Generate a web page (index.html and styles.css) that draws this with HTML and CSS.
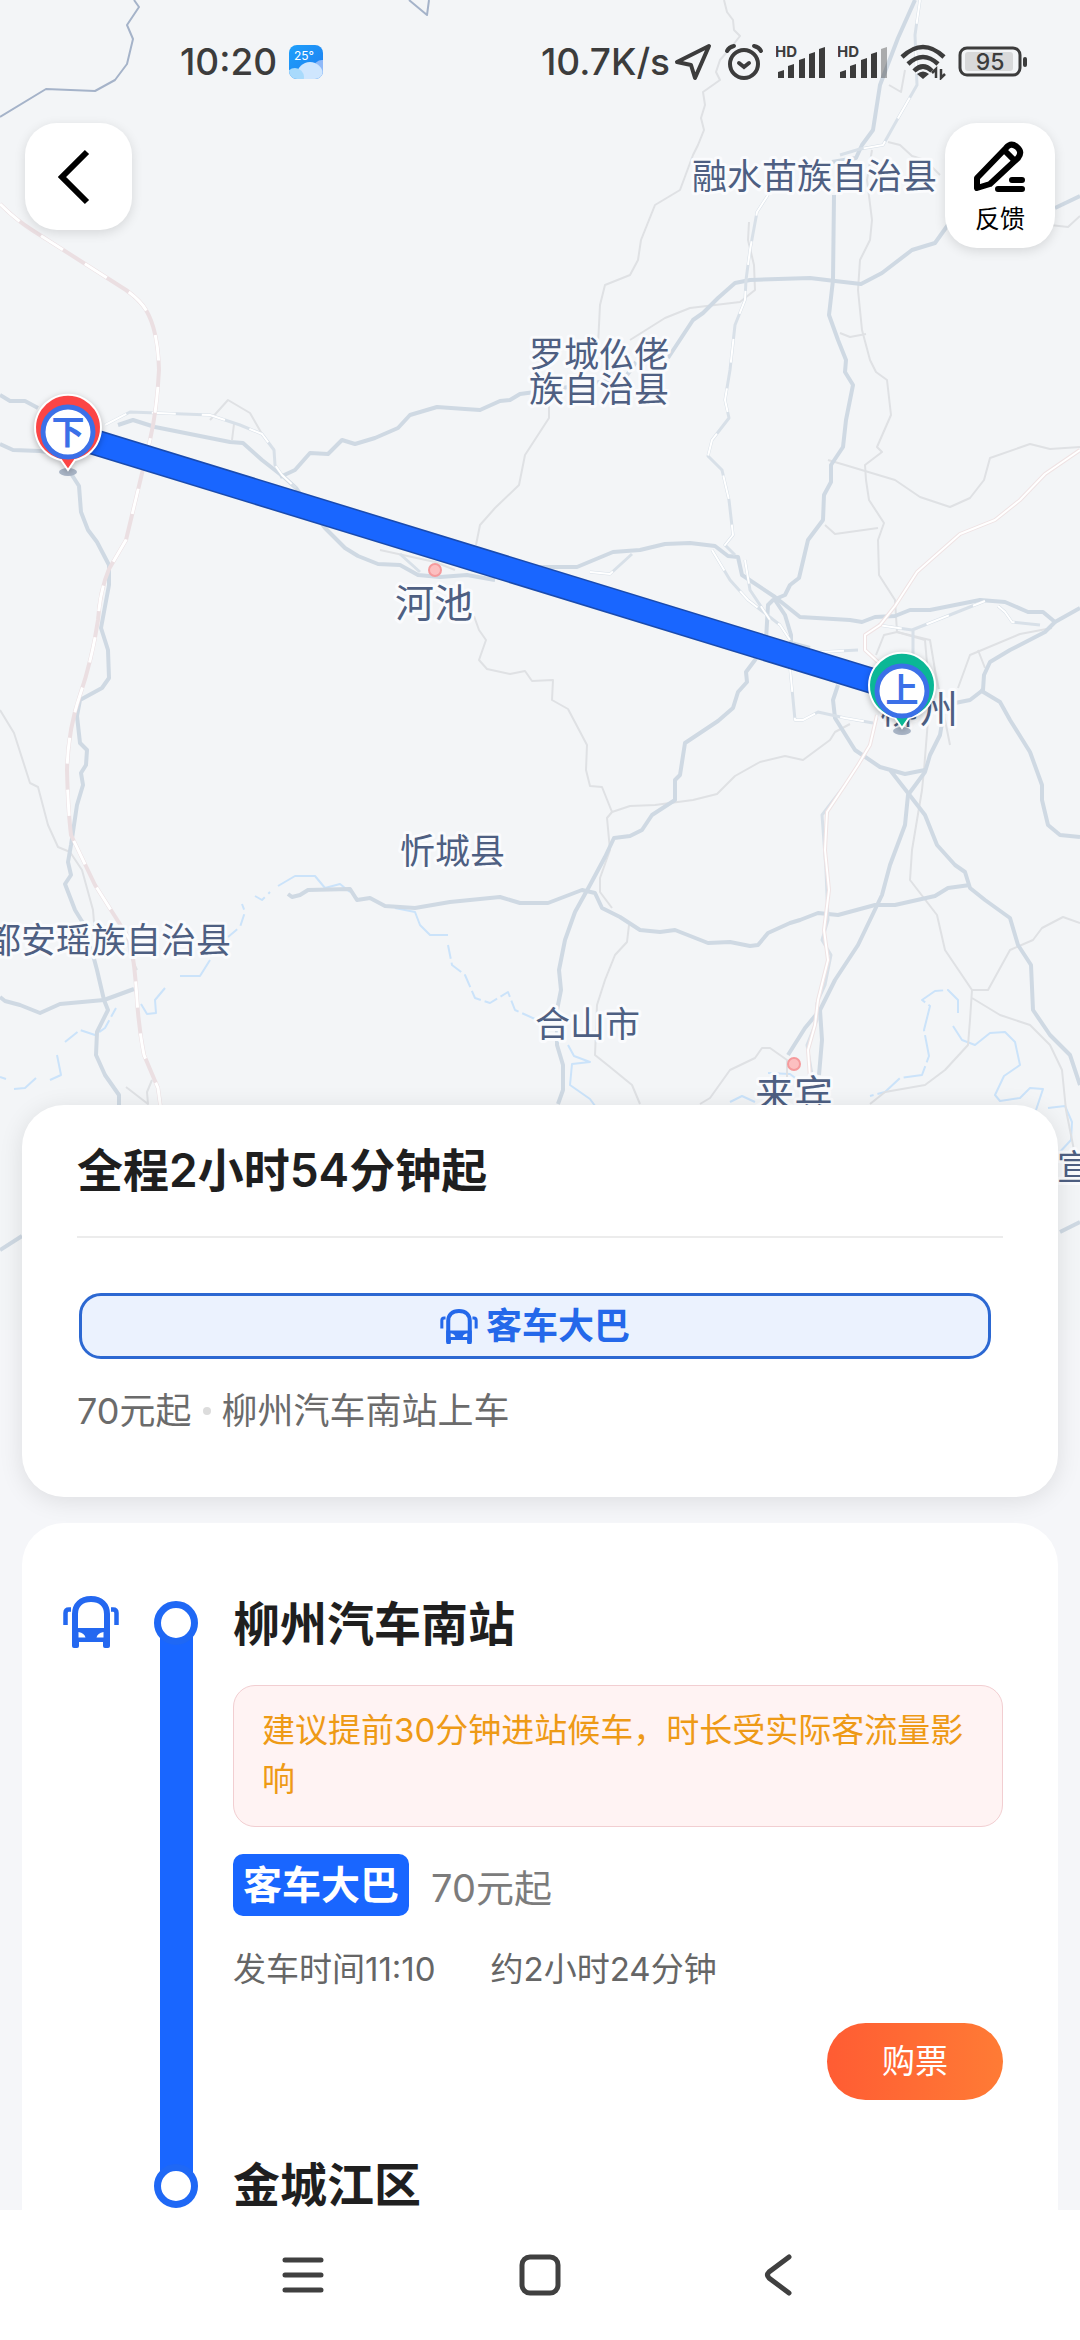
FILE: index.html
```html
<!DOCTYPE html>
<html lang="zh-CN">
<head>
<meta charset="utf-8">
<meta name="viewport" content="width=device-width, initial-scale=1">
<title>客车大巴路线</title>
<link rel="stylesheet" href="styles.css">
</head>
<body>
<svg class="sprite" aria-hidden="true">
  <symbol id="bus" viewBox="0 0 56 52">
    <path fill="none" stroke="currentColor" stroke-width="6" d="M12 49V18C12 9 18 3 28 3S44 9 44 18V49"/>
    <path fill="currentColor" fill-rule="evenodd" d="M9 32H47V50Q47 52 45 52H42Q40 52 40 50V46H16V50Q16 52 14 52H11Q9 52 9 50ZM15.500 36V41.500H22.500Q21.500 37 15.500 36ZM40.500 36V41.500H33.500Q34.500 37 40.500 36Z"/>
    <path fill="none" stroke="currentColor" stroke-width="4.500" d="M8 13.500H6Q2.500 13.500 2.500 17V29M48 13.500H50Q53.500 13.500 53.500 17V29"/>
  </symbol>
</svg>
<div class="app">
  <main class="content">
    <svg class="map" viewBox="0 0 1080 1330" preserveAspectRatio="xMidYMin slice" role="img" aria-label="路线地图">
      <g class="line border">
        <path d="M134 0L139 7L127 25L133 39L127 64L115 80L95 91L46 89L0 117"/>
        <path d="M409 0L427 15L429 0"/>
      </g>
      <g class="line river">
        <path d="M278 886L295 876H315L325 888L340 884L350 892"/>
        <path d="M228 937L240 927L245 912L242 904M255 896L262 900L270 892" stroke-dasharray="12 5"/>
        <path d="M395 908L415 912L420 925L430 935L448 935"/>
        <path d="M448 945L452 965L465 975L475 998L490 1003L508 992L515 1010L535 1019" stroke-dasharray="14 4"/>
        <path d="M210 960L200 976H180M165 988L155 1000L156 1013L147 1014L141 1004"/>
        <path d="M65 1042L80 1030L95 1035L105 1028L116 1008" stroke-dasharray="16 4"/>
        <path d="M57 1055L61 1075L50 1080M14 1089L25 1088L36 1078M0 1077L6 1079"/>
        <path d="M568 1045L574 1056L590 1062L572 1064L570 1085L590 1099L598 1110"/>
        <path d="M958 1013V1000L948 990L935 991L922 1000L930 1006L924 1030L929 1056L922 1075L900 1078L885 1092L870 1096" stroke-dasharray="28 4"/>
        <path d="M953 1026L962 1040L975 1045L990 1033L1005 1032L1015 1042L1020 1065L1004 1076L995 1095L1000 1101L1020 1098L1030 1088L1043 1089L1036 1110"/>
        <path d="M1048 1108L1065 1106L1072 1122L1071 1140L1058 1154M768 1073L790 1074L798 1080M730 1102L742 1096L755 1102"/>
      </g>
      <g class="line minor">
        <path d="M0 710L14 733L30 783L38 787L48 825L58 847L70 852L82 870L93 910L95 935M126 930L130 955L137 970M126 1087L148 1104L147 1092L152 1080"/>
        <path d="M724 0L727 12L733 20L734 30L740 36L733 45L720 60L716 72L720 80L703 92L705 105L701 118L704 130L698 145L693 155L680 190L655 205L641 240L638 260L630 275L605 285L600 305L598 345"/>
        <path d="M549 406V418L525 455L519 485L495 508L480 525L476 545"/>
        <path d="M630 340L665 318L690 308L740 302L755 290L754 265L748 240L749 222"/>
        <path d="M872 150L867 180L872 220L870 240L860 260L858 290L862 330L870 360L876 372L887 380L891 415L877 447L882 452L865 465L866 480L869 500L884 523L878 540L879 575L895 600L897 632L930 640L935 670L950 745M840 333L850 337L866 334"/>
        <path d="M828 460L845 465L895 480L920 497L950 507L970 498L984 480L990 458L1030 444L1050 449L1080 447M825 525L835 534L878 528"/>
        <path d="M888 142L900 145L912 156L925 160L940 175M1050 225L1068 227L1080 216M889 85L901 92L905 70"/>
        <path d="M474 616L479 630L486 640L479 660L487 669L510 674L525 671L532 681L553 680L552 700L568 709L587 745L586 770L590 786L602 787L612 812L630 806L655 805L693 800L717 794L735 776L760 762L785 756L803 760L830 740L835 732L850 724"/>
        <path d="M612 812L607 818L610 850L600 878L600 892L612 908M629 925L627 942L615 955L605 980L597 1005L595 1055L610 1067L632 1085L640 1104"/>
        <path d="M932 690L928 720L924 770L922 790L912 850L910 880L937 915L945 950L972 990L970 1020L968 1045L945 1070L925 1085L885 1092L870 1104"/>
        <path d="M972 990H988L1010 950L1033 940L1042 928L1063 917L1080 923M972 998L1000 1015L1030 1025L1050 1045L1062 1070L1066 1110L1074 1150L1066 1182"/>
        <path d="M700 1104L710 1098L730 1070L755 1058L762 1048L770 1048L787 1060V1082"/>
        <path d="M876 655L884 635L897 632L925 640L928 675M958 688L970 655L1020 634L1052 628M978 650L985 668"/>
        <path d="M210 420L228 400L250 413L262 434M234 424L232 440M380 550L435 562L455 570"/>
      </g>
      <g class="line road">
        <path d="M0 395L10 401H25L38 408M0 444L13 450L40 451L68 455M70 472L79 486L81 512L88 530L97 542L109 565V585L101 628L108 650L109 678L102 688L80 700L77 716L80 743L87 750L86 765L81 773L83 785L77 805L71 845L68 862L71 875L65 884L75 910L83 923L93 955L97 970L104 1000L108 1010L97 1032L96 1055L105 1075L119 1095V1110L113 1130"/>
        <path d="M0 997L5 1001L20 1005L40 1013L60 1004L104 1000L134 989"/>
        <path d="M118 425L133 420L155 427L195 435L230 442L243 443L262 460L285 478L296 488L325 528L345 548L358 556L378 564L400 565L418 575L440 577L467 575L495 580"/>
        <path d="M280 477L295 470L310 453L328 454L342 440L355 444L375 438L398 428L410 415L437 407L465 409L480 410L500 401L510 400L520 394L550 390L625 378L636 362M668 358L693 320L703 313L718 298L735 283L750 280L810 278L835 281L861 284L882 273L912 250L935 243L950 222M1055 208L1080 196"/>
        <path d="M915 0L898 38L880 85L873 130L862 145L856 158L832 162M834 195L833 280L829 315L838 340L846 360L845 372L853 385L846 420L843 447L831 465V482L824 495L823 520L808 540L799 578L790 585L785 595L773 600L768 605L766 640L755 660L746 672L747 682L738 692L733 708L718 721L685 743L680 775L675 780V800L652 815L642 830L630 836L614 838L605 857L590 885L575 912L565 940L559 970L561 990L557 1010V1045L563 1065V1090L558 1104"/>
        <path d="M540 567H577L613 552L640 550L665 544L690 543L715 546L728 556L738 557L742 575L775 597L800 617L850 620L862 622L875 617L895 616L910 610H930L980 600L1005 602L1028 612L1043 612L1055 622L1080 608"/>
        <path d="M775 600L785 615L791 635V643L810 648"/>
        <path d="M1055 622L1045 632L1010 650L990 662L984 675L983 690L970 700L945 705L940 735L930 755L925 772L908 795L905 825L890 865L882 895L870 920L858 945L835 980L820 1010L805 1028L788 1055"/>
        <path d="M838 685L833 700L835 718L855 750L880 767L905 774L925 770M890 770L908 793L925 815L937 845L955 865L965 872L970 888L985 900L1010 918L1018 945L1031 965L1033 1010L1050 1035L1070 1055L1080 1085"/>
        <path d="M820 1010L822 1040L819 1075"/>
        <path d="M980 690L1000 702L1010 720L1030 752L1042 785V800L1048 825L1060 835L1080 837"/>
        <path d="M288 894L292 897L300 895L308 890L350 889L357 900L370 898L385 906L415 908L450 902L480 899L500 897L520 903H548L582 890L595 893L602 908L620 917L640 930L660 932L675 930L708 943L730 942L750 946L758 945L768 933L790 923L800 920L818 913L838 915L875 905H895L935 896L948 888L970 885"/>
        <path d="M1060 1232L1080 1222M0 1250L22 1236"/>
      </g>
      <g class="line lane">
        <path d="M105 425L130 412L210 415L240 425L262 434L274 450L275 465L282 475L296 488"/>
        <path d="M768 195L757 212L750 250L746 280L745 300L735 325L730 370L725 400L729 418L712 440L708 456L722 470L729 500L733 535L725 545L735 555"/>
        <path d="M920 0L915 35L917 85L897 120L883 145L860 149L840 155M590 572L610 574L632 554M712 550L730 580L748 600L780 625L790 640M745 560L750 590L770 620M790 668L795 720H803L818 712L845 718L873 723M820 652L858 650M878 625L912 630L985 601M913 630V655M998 606L1005 612L1012 622L1040 625"/>
        <path d="M845 785L822 815L826 870L828 920L822 940L831 955L825 985L817 1003V1020L807 1045L812 1075M400 554L420 572"/>
      </g>
      <g class="line lane-dash">
        <path d="M105 425L130 412L210 415L240 425L262 434L274 450L275 465L282 475L296 488"/>
        <path d="M768 195L757 212L750 250L746 280L745 300L735 325L730 370L725 400L729 418L712 440L708 456L722 470L729 500L733 535L725 545L735 555"/>
        <path d="M920 0L915 35L917 85L897 120L883 145L860 149L840 155M590 572L610 574L632 554M712 550L730 580L748 600L780 625L790 640M745 560L750 590L770 620M790 668L795 720H803L818 712L845 718L873 723M820 652L858 650M878 625L912 630L985 601M998 606L1005 612L1012 622L1040 625"/>
      </g>
      <path class="line rail" d="M0 204Q16 220 32 230L126 290Q140 300 146 310Q158 330 159 370Q157 410 150 440L126 540L109 569Q100 590 98 620Q92 660 80 695Q68 730 67 770Q68 810 71 835L95 885L130 940Q135 965 137 1000Q139 1030 144 1055L158 1088L161 1110"/>
      <path class="line rail-dash" d="M0 204Q16 220 32 230L126 290Q140 300 146 310Q158 330 159 370Q157 410 150 440L126 540L109 569Q100 590 98 620Q92 660 80 695Q68 730 67 770Q68 810 71 835L95 885L130 940Q135 965 137 1000Q139 1030 144 1055L158 1088L161 1110"/>
      <path class="line fast" d="M1080 450L1045 474L1020 500L995 520L960 534L935 556L917 572L895 606L880 625L865 635V650L878 662M877 715L870 745L858 765L845 785L827 812L825 850L829 890L824 930L828 960L818 1000L815 1025L808 1050L810 1078"/>
      <path class="line fast-core" d="M1080 450L1045 474L1020 500L995 520L960 534L935 556L917 572L895 606L880 625L865 635V650L878 662M877 715L870 745L858 765L845 785L827 812L825 850L829 890L824 930L828 960L818 1000L815 1025L808 1050L810 1078"/>

      <g class="town">
        <circle cx="435" cy="570" r="6"/>
        <circle cx="794" cy="1064" r="6"/>
      </g>
      <g class="place">
        <text x="692" y="189">融水苗族自治县</text>
        <text x="529" y="367">罗城仫佬</text>
        <text x="529" y="402">族自治县</text>
        <text x="400" y="864">忻城县</text>
        <text x="-14" y="953">都安瑶族自治县</text>
        <text x="535" y="1037">合山市</text>
        <text x="1057" y="1180">宣</text>
      </g>
      <g class="place city">
        <text x="395" y="617">河池</text>
        <text x="755" y="1108">来宾</text>
        <text x="880" y="723">柳州</text>
      </g>

      <line class="route-edge" x1="68" y1="434" x2="902" y2="690"/>
      <line class="route" x1="68" y1="434" x2="902" y2="690"/>

      <g class="pin pin-off">
        <ellipse cx="68" cy="472" rx="9" ry="4"/>
        <path d="M68 470L61 460A33 33 0 1 1 75 460Z"/>
        <circle cx="68" cy="432" r="25"/>
        <text x="68" y="444">下</text>
      </g>
      <g class="pin pin-on">
        <ellipse cx="902" cy="731" rx="9" ry="4"/>
        <path d="M902 728L895 718A33 33 0 1 1 909 718Z"/>
        <circle cx="902" cy="691" r="25"/>
        <text x="902" y="702">上</text>
      </g>
    </svg>

    <header class="top">
      <div class="status">
        <div class="status-group">
          <span>10:20</span>
          <svg class="weather" viewBox="0 0 34 34" width="34" height="34" role="img" aria-label="天气 25°">
            <defs><linearGradient id="sky" x2="1" y2="1"><stop offset="0" stop-color="#1ea0fb"/><stop offset="1" stop-color="#1f7df0"/></linearGradient>
            <clipPath id="tile"><rect width="34" height="34" rx="8"/></clipPath></defs>
            <g clip-path="url(#tile)"><rect width="34" height="34" fill="url(#sky)"/>
            <circle cx="33" cy="23" r="8" fill="#8fb9f8"/><circle cx="21" cy="30" r="13" fill="#cfe6fe"/><circle cx="6" cy="32" r="9" fill="#a8dafc"/></g>
            <text x="5" y="15" font-size="12" fill="#fff">25°</text>
          </svg>
        </div>
        <div class="status-group">
          <div class="speed">
            <span>10.7K/s</span>
            <svg viewBox="0 0 38 38" width="38" height="38"><path d="M35 3L3 19L17 22L21 35Z" fill="none" stroke="currentColor" stroke-width="4" stroke-linejoin="round"/></svg>
          </div>
          <svg viewBox="0 0 40 38" width="40" height="38"><g fill="none" stroke="currentColor" stroke-width="4" stroke-linecap="round"><circle cx="20" cy="21" r="14"/><path d="M15 20L20 24L25 20M3 8Q5 4 10 3M37 8Q35 4 30 3"/></g></svg>
          <svg class="signal" viewBox="0 0 50 34" width="50" height="34"><text x="-1" y="12">HD</text><path d="M2 27L8 25V33H2ZM12 21L18 19V33H12ZM23 15L29 13V33H23ZM33 9L39 7V33H33ZM43 4L49 2V33H43Z"/></svg>
          <svg class="signal" viewBox="0 0 50 34" width="50" height="34"><text x="-1" y="12">HD</text><path d="M2 27L8 25V33H2ZM12 21L18 19V33H12ZM23 15L29 13V33H23ZM33 9L39 7V33H33Z"/><path d="M43 4L49 2V33H43Z" fill-opacity=".4"/></svg>
          <svg viewBox="0 0 46 36" width="46" height="36"><g fill="none" stroke="currentColor" stroke-width="4.500"><path d="M2 13Q23 -7 44 13M8 20Q23 6 38 20M14 27Q23 18 32 27"/></g><path d="M17 30Q23 25 29 30L23 35Z" fill="currentColor"/><path d="M32 29L36 25V34M45 30L41 34V25" fill="none" stroke="currentColor" stroke-width="2.500"/></svg>
          <svg class="battery" viewBox="0 0 72 32" width="72" height="32"><rect x="2" y="2" width="60" height="27" rx="7" fill="none" stroke="currentColor" stroke-width="3"/><rect x="7" y="6" width="48" height="19" rx="3" fill="#d8d9da"/><rect x="65" y="11" width="4" height="10" rx="2" fill="currentColor"/><text x="32" y="24" text-anchor="middle">95</text></svg>
        </div>
      </div>
      <div class="tools">
        <button class="tool back" type="button" aria-label="返回">
          <svg viewBox="0 0 32 56" width="32" height="56"><path d="M29 3L4 28L29 53" fill="none" stroke="currentColor" stroke-width="6"/></svg>
        </button>
        <button class="tool feedback" type="button">
          <svg viewBox="0 0 54 54" width="54" height="54"><g fill="none" stroke="currentColor" stroke-width="6" stroke-linecap="round" stroke-linejoin="round"><path d="M4 48V38L33 8Q38 2 44 7Q50 12 45 18L17 44L4 48ZM32 11L42 21M39 40H49M25 49H49"/></g></svg>
          <span>反馈</span>
        </button>
      </div>
    </header>

    <section class="card summary">
      <h1>全程2小时54分钟起</h1>
      <button class="mode" type="button"><svg class="bus-small"><use href="#bus"/></svg>客车大巴</button>
      <p class="fare"><span>70元起</span><i class="dot"></i><span>柳州汽车南站上车</span></p>
    </section>

    <section class="card route-card">
      <svg class="bus-large"><use href="#bus"/></svg>
      <div class="track"><i class="node"></i><i class="bar"></i><i class="node"></i></div>
      <div class="stops">
        <h2>柳州汽车南站</h2>
        <p class="notice">建议提前30分钟进站候车，时长受实际客流量影响</p>
        <p class="trip"><strong class="tag">客车大巴</strong><span>70元起</span></p>
        <p class="times"><span>发车时间11:10</span><span>约2小时24分钟</span></p>
        <button class="buy" type="button">购票</button>
        <h2>金城江区</h2>
      </div>
    </section>
  </main>

  <nav class="system-nav">
    <button type="button" aria-label="最近任务"><svg viewBox="0 0 46 46" width="46" height="46"><path d="M6 8H42M6 23H42M6 38H42"/></svg></button>
    <button type="button" aria-label="主屏幕"><svg viewBox="0 0 46 46" width="46" height="46"><rect x="5" y="5" width="36" height="36" rx="8"/></svg></button>
    <button type="button" aria-label="返回"><svg viewBox="0 0 46 46" width="46" height="46"><path d="M34 5L14 20Q11 23 14 26L34 41"/></svg></button>
  </nav>
</div>
</body>
</html>
```
FILE: styles.css
```css
* {
  box-sizing: border-box;
}

body {
  margin: 0;
  background: #fff;
  color: #1f1f1f;
  font-family: Inter, "Noto Sans CJK SC", sans-serif;
  font-size: 33px;
}

h1,
h2,
p {
  margin: 0;
}

button {
  padding: 0;
  border: 0;
  background: none;
  color: inherit;
  font: inherit;
  cursor: pointer;
}

svg {
  display: block;
  flex: none;
}

.sprite {
  position: absolute;
  width: 0;
  height: 0;
}

.app {
  display: flex;
  flex-direction: column;
  height: 100vh;
}

.content {
  position: relative;
  flex: 1;
  min-height: 0;
  overflow: auto;
  scrollbar-width: none;
  background: #f5f6f9;
}

/* Map */

.map {
  position: absolute;
  top: 0;
  left: 0;
  width: 100%;
  height: 1330px;
  background: #f3f5f7;
}

.line {
  fill: none;
  stroke-linejoin: round;
}

.border { stroke: #a5b3c9; stroke-width: 2; }
.river { stroke: #cbe3fa; stroke-width: 2; }
.minor { stroke: #dfe1e4; stroke-width: 2; }
.road { stroke: #cfd9e3; stroke-width: 4; }
.lane { stroke: #d8e0e8; stroke-width: 3; }
.lane-dash { stroke: #fff; stroke-width: 2; stroke-dasharray: 24 26; }
.rail { stroke: #ebdfe2; stroke-width: 4; }
.rail-dash { stroke: #fff; stroke-width: 3; stroke-dasharray: 26 26; }
.fast { stroke: #efe3e4; stroke-width: 4; }
.fast-core { stroke: #fff; stroke-width: 2; }

.town circle {
  fill: #fcbfc0;
  stroke: #f59a9c;
  stroke-width: 2;
}

.place text {
  fill: #4e5f82;
  stroke: #fafbfd;
  stroke-width: 6;
  stroke-linejoin: round;
  paint-order: stroke;
  font-size: 35px;
}

.city text {
  font-size: 39px;
}

.route-edge { stroke: #1a4bae; stroke-width: 26; }
.route { stroke: #1966ff; stroke-width: 23; }

.pin ellipse { fill: #a9b5c6; }
.pin path { stroke: #fff; stroke-width: 2; filter: drop-shadow(0 2px 3px #0004); }
.pin circle { fill: #fff; stroke: #3b70e8; stroke-width: 5; }
.pin text { fill: #3b70e8; font-size: 33px; font-weight: 700; text-anchor: middle; }
.pin-off path { fill: #fb4545; }
.pin-on path { fill: #0bb795; }

/* Status bar and floating tools */

.top {
  position: relative;
  min-height: 1105px;
}

.status {
  display: flex;
  justify-content: space-between;
  height: 123px;
  padding: 0 50px 0 180px;
  color: #3c3c3c;
  font-size: 37px;
  font-weight: 500;
}

.status-group {
  display: flex;
  align-items: center;
  gap: 12px;
}

.speed {
  display: flex;
  align-items: center;
  gap: 4px;
}

.weather text { font-weight: 400; }
.signal { fill: #3c3c3c; }
.signal text { font-size: 15px; font-weight: 700; }
.battery text { fill: #3c3c3c; font-size: 23px; }

.tools {
  display: flex;
  justify-content: space-between;
  align-items: flex-start;
  padding: 0 25px;
}

.tool {
  display: flex;
  flex-direction: column;
  align-items: center;
  border-radius: 32px;
  background: #fff;
  box-shadow: 0 3px 12px #0000001f;
  color: #000;
}

.back {
  justify-content: center;
  width: 107px;
  height: 107px;
  padding-right: 10px;
}

.feedback {
  width: 110px;
  height: 125px;
  padding-top: 17px;
  font-size: 25px;
  line-height: 32px;
}

.feedback span {
  margin-top: 9px;
}

/* Cards */

.card {
  position: relative;
  margin: 0 22px;
  border-radius: 42px;
  background: #fff;
}

.summary {
  height: 392px;
  padding: 30px 55px 0;
  box-shadow: 0 4px 24px #0000001a;
}

.summary h1 {
  padding-bottom: 31px;
  border-bottom: 2px solid #ececec;
  font-size: 46px;
  font-weight: 600;
  line-height: 70px;
}

.mode {
  display: flex;
  justify-content: center;
  align-items: center;
  gap: 8px;
  width: calc(100% - 14px);
  height: 66px;
  margin: 55px 0 0 2px;
  border: 3px solid #2c68d2;
  border-radius: 22px;
  background: #ebf2fe;
  color: #2468ea;
  font-size: 36px;
  font-weight: 600;
  line-height: 60px;
}

.bus-small {
  width: 38px;
  height: 35px;
}

.fare {
  display: flex;
  align-items: center;
  gap: 11px;
  margin-top: 26px;
  color: #6b6b6b;
  font-size: 36px;
  line-height: 52px;
}

.dot {
  width: 8px;
  height: 8px;
  border-radius: 50%;
  background: #dcdcdc;
}

.route-card {
  display: grid;
  grid-template-columns: 91px 44px 1fr;
  margin-top: 26px;
  padding: 60px 55px 40px 41px;
}

.bus-large {
  width: 56px;
  height: 52px;
  margin-top: 13px;
  color: #2468f0;
}

.track {
  display: flex;
  flex-direction: column;
  align-items: center;
  padding: 18px 0;
}

.node {
  position: relative;
  width: 44px;
  height: 44px;
  border: 7px solid #1f68f5;
  border-radius: 50%;
  background: #fff;
}

.bar {
  flex: 1;
  width: 33px;
  margin: -8px 0;
  background: #1966ff;
}

.stops {
  display: flex;
  flex-direction: column;
  margin-left: 35px;
}

.stops h2 {
  font-size: 47px;
  font-weight: 600;
  line-height: 82px;
}

.notice {
  margin: 20px 0 27px;
  padding: 20px 28px 22px;
  border: 1px solid #f2ced1;
  border-radius: 22px;
  background: #fff3f3;
  color: #ee9a16;
  line-height: 49px;
}

.trip {
  display: flex;
  align-items: center;
  gap: 22px;
  color: #7c7c7c;
  font-size: 39px;
}

.trip span {
  font-size: 38px;
}

.tag {
  padding: 0 10px;
  border-radius: 10px;
  background: #1966ff;
  color: #fff;
  font-weight: 600;
  line-height: 62px;
}

.times {
  display: flex;
  gap: 55px;
  margin: 28px 0 29px;
  color: #666;
  line-height: 50px;
}

.buy {
  align-self: flex-end;
  width: 176px;
  height: 77px;
  margin-bottom: 44px;
  border-radius: 39px;
  background: linear-gradient(90deg, #ff5c33, #ff7b35);
  color: #fff;
  line-height: 77px;
}

/* System navigation */

.system-nav {
  display: flex;
  justify-content: center;
  align-items: center;
  gap: 192px;
  height: 130px;
  background: #fff;
}

.system-nav svg {
  fill: none;
  stroke: #404040;
  stroke-width: 5;
  stroke-linecap: round;
}
```
